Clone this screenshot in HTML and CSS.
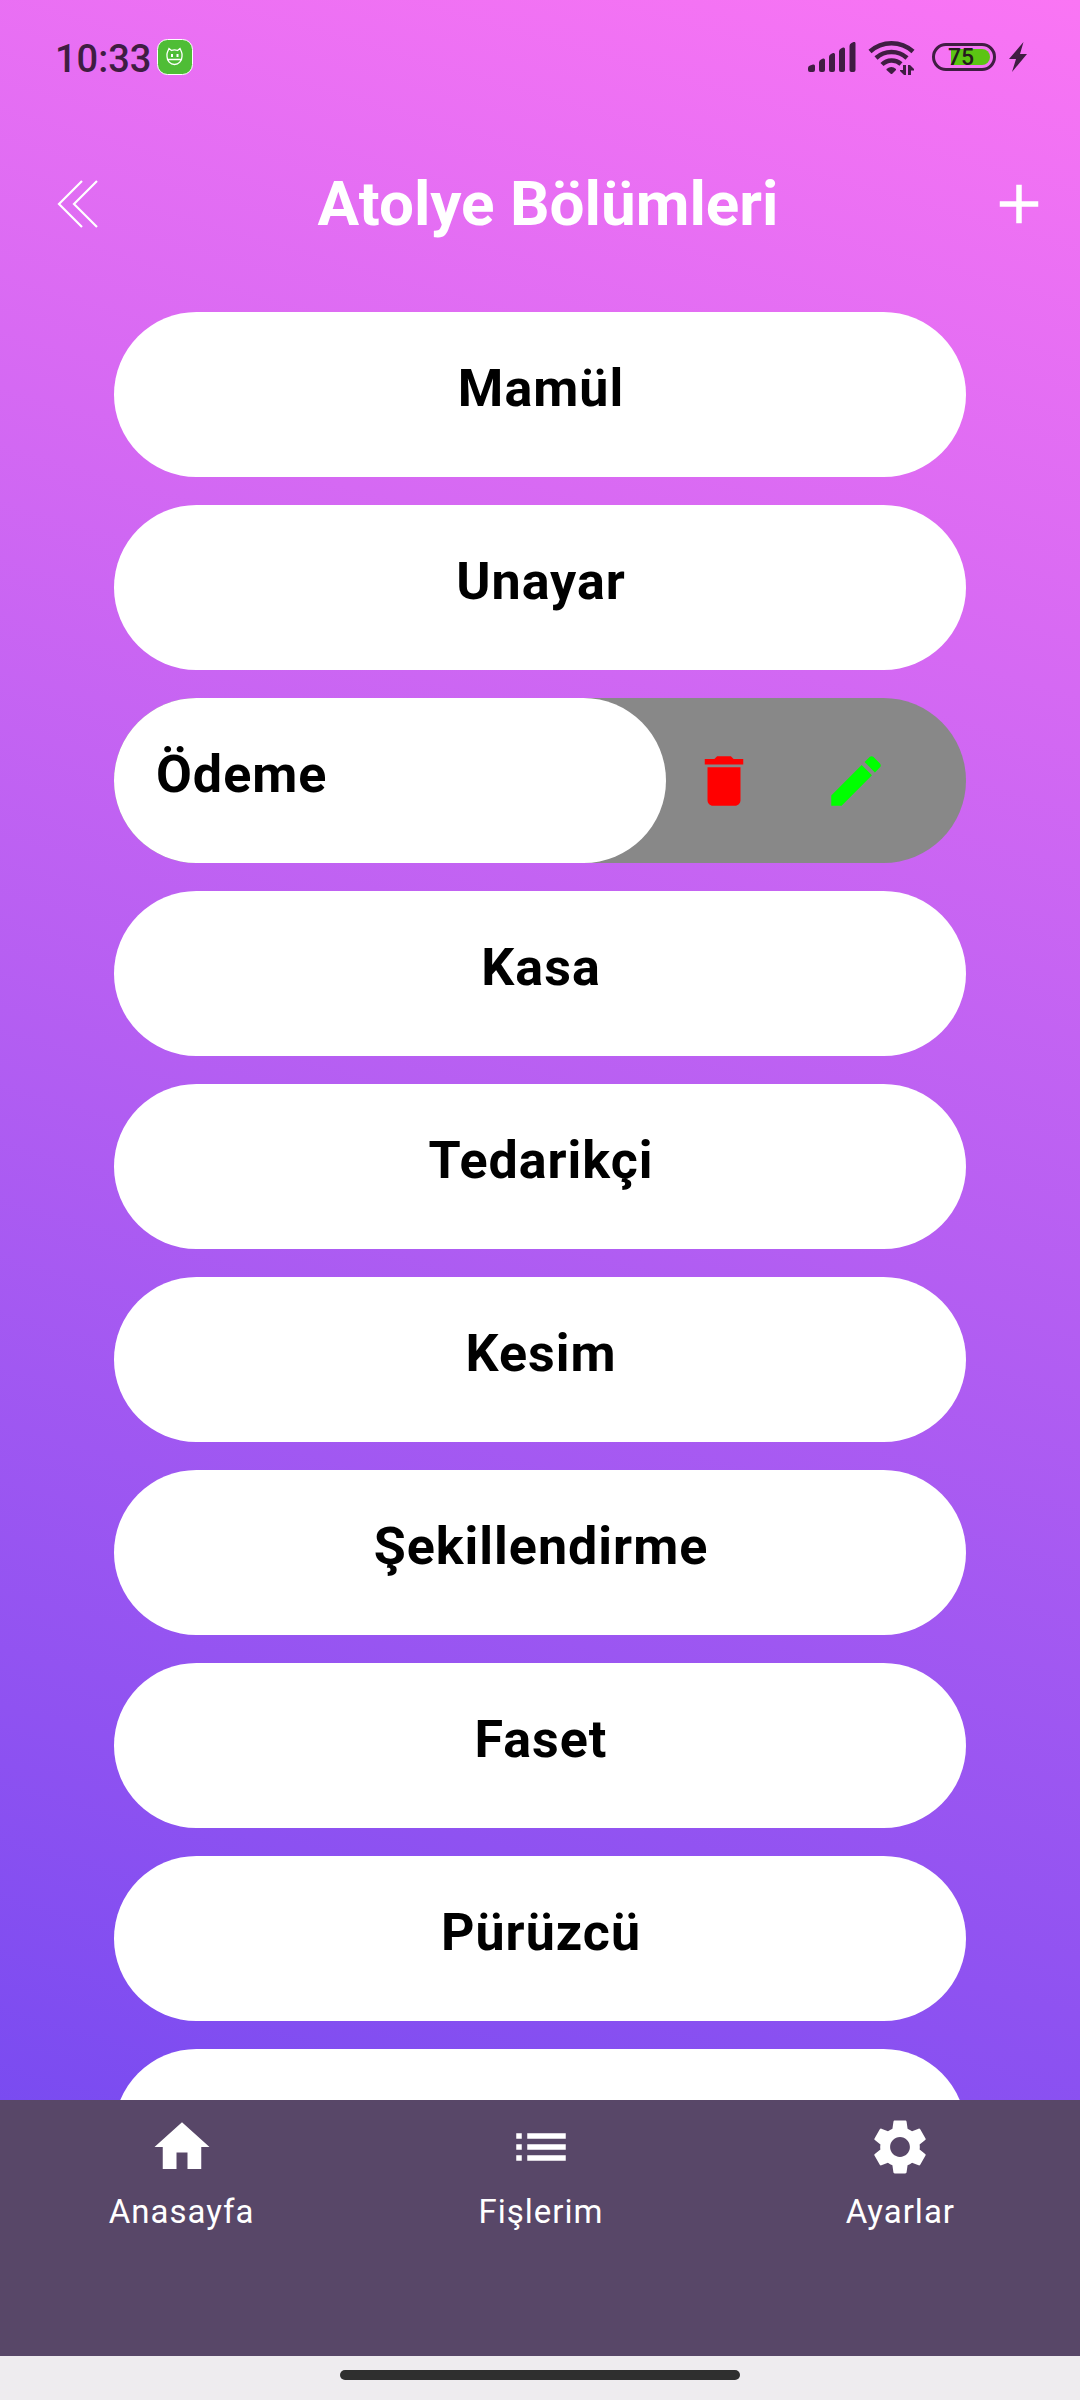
FILE: index.html
```html
<!DOCTYPE html>
<html lang="tr">
<head>
  <meta charset="utf-8">
  <meta name="viewport" content="width=device-width, initial-scale=1">
  <title>Atolye Bölümleri</title>
  <link rel="stylesheet" href="styles.css">
</head>
<body>
  <div class="app">
    <div class="status">
      <span class="status-time">10:33</span>
      <svg class="status-badge" viewBox="0 0 36 36" aria-hidden="true">
        <rect x="0.5" y="0.5" width="35" height="35" rx="10" fill="#4fbd36" stroke="#fff"/>
        <g fill="none" stroke="#fff" stroke-width="1.3">
          <path d="M10.500 13 12 9.500l2.500 2a9 9 0 0 1 6 0l2.500-2 1.500 3.500a8 8 0 0 1 .5 4.500 7.500 8 0 0 1-15 0 8 8 0 0 1 .5-4.500zM10 20.500h15"/>
        </g>
        <rect x="14" y="15" width="2" height="3" fill="#fff"/>
        <rect x="19.500" y="15" width="2" height="3" fill="#fff"/>
      </svg>
      <div class="status-icons">
        <svg class="signal" viewBox="0 0 48 30" aria-hidden="true">
          <path d="M0 26q0-2 2-2.500l3-1q2-.5 2 1.500v4q0 2-2 2H2q-2 0-2-2zM11 20.500q0-2 2-3l2-1q2-.5 2 1.500v10q0 2-2 2h-2q-2 0-2-2zM21 15q0-2 2-3l2-1q2-.5 2 1.500V28q0 2-2 2h-2q-2 0-2-2zM31 9.500q0-2 2-3l2-1q2-.5 2 1.500v21q0 2-2 2h-2q-2 0-2-2zM41.500 4q0-2 2-3l2-1q2-.5 2 1.500V28q0 2-2 2h-2q-2 0-2-2z" fill="#3f1d42"/>
        </svg>
        <svg class="wifi" viewBox="0 0 48 36" aria-hidden="true">
          <g fill="none" stroke="#3f1d42" stroke-width="4.500">
            <path d="M2 12.500a32 32 0 0 1 43 0M8 19a23 23 0 0 1 31 0M14 25.500a14 14 0 0 1 19-.5"/>
          </g>
          <path d="M18.500 30q5-4 9.500 0v1l-4 4h-1l-4.500-4z" fill="#3f1d42"/>
          <path d="M35 26h3v10h-2l-4-4v-1h3zM40 36V26h2l4 4v1.500h-3V36z" fill="#3f1d42"/>
        </svg>
        <div class="battery"><span class="battery-level">75</span></div>
        <svg class="bolt" viewBox="0 0 20 30" aria-hidden="true">
          <path d="M15.500 0 1 17h7L4 30 19 12h-7z" fill="#3f1d42"/>
        </svg>
      </div>
    </div>

    <header class="header">
      <button class="icon-button" type="button" aria-label="Geri">
        <svg class="icon" viewBox="0 0 66 66" fill="none" stroke="#fff" stroke-width="2.200" aria-hidden="true">
          <path d="M38 10 15 33l23 23M53 10 30 33l23 23"/>
        </svg>
      </button>
      <h1 class="title">Atolye Bölümleri</h1>
      <button class="icon-button" type="button" aria-label="Ekle">
        <svg class="icon" viewBox="0 0 24 24" aria-hidden="true"><path fill="#fff" d="M19 13h-6v6h-2v-6H5v-2h6V5h2v6h6v2z"/></svg>
      </button>
    </header>

    <main class="content">
      <ul class="list">
        <li class="row"><button class="card" type="button">Mamül</button></li>
        <li class="row"><button class="card" type="button">Unayar</button></li>
        <li class="row row-open">
          <button class="card card-open" type="button">Ödeme</button>
          <div class="actions">
            <button class="icon-button" type="button" aria-label="Sil">
              <svg class="icon" viewBox="0 0 24 24" aria-hidden="true"><path fill="#f00" d="M6 19c0 1.100.9 2 2 2h8c1.100 0 2-.9 2-2V7H6v12zM19 4h-3.500l-1-1h-5l-1 1H5v2h14V4z"/></svg>
            </button>
            <button class="icon-button" type="button" aria-label="Düzenle">
              <svg class="icon" viewBox="0 0 24 24" aria-hidden="true"><path fill="#0f0" d="M3 17.250V21h3.750L17.810 9.940l-3.750-3.750L3 17.250zM20.710 7.040c.39-.39.39-1.020 0-1.410l-2.340-2.340c-.39-.39-1.020-.39-1.410 0l-1.830 1.830 3.750 3.750 1.830-1.830z"/></svg>
            </button>
          </div>
        </li>
        <li class="row"><button class="card" type="button">Kasa</button></li>
        <li class="row"><button class="card" type="button">Tedarikçi</button></li>
        <li class="row"><button class="card" type="button">Kesim</button></li>
        <li class="row"><button class="card" type="button">Şekillendirme</button></li>
        <li class="row"><button class="card" type="button">Faset</button></li>
        <li class="row"><button class="card" type="button">Pürüzcü</button></li>
        <li class="row"><button class="card" type="button"></button></li>
      </ul>
    </main>

    <nav class="tabs">
      <a class="tab" href="#anasayfa">
        <svg class="icon" viewBox="0 0 24 24" aria-hidden="true"><path fill="#fff" d="M10 20v-6h4v6h5v-8h3L12 3 2 12h3v8z"/></svg>
        <span>Anasayfa</span>
      </a>
      <a class="tab" href="#fislerim">
        <svg class="icon" viewBox="0 0 24 24" aria-hidden="true"><path fill="#fff" d="M3 13h2v-2H3v2zm0 4h2v-2H3v2zm0-8h2V7H3v2zm4 4h14v-2H7v2zm0 4h14v-2H7v2zM7 7v2h14V7H7z"/></svg>
        <span>Fişlerim</span>
      </a>
      <a class="tab" href="#ayarlar">
        <svg class="icon" viewBox="0 0 24 24" aria-hidden="true"><path fill="#fff" d="M19.140 12.940c.04-.3.06-.61.06-.94 0-.32-.02-.64-.07-.94l2.030-1.580c.18-.14.23-.41.12-.61l-1.920-3.320c-.12-.22-.37-.29-.59-.22l-2.390.96c-.5-.38-1.030-.7-1.620-.94l-.36-2.540c-.04-.24-.24-.41-.48-.41h-3.840c-.24 0-.43.17-.47.41l-.36 2.540c-.59.24-1.130.57-1.620.94l-2.390-.96c-.22-.08-.47 0-.59.22L2.740 8.870c-.12.21-.08.47.12.61l2.030 1.580c-.05.3-.09.63-.09.94s.02.64.07.94l-2.030 1.580c-.18.14-.23.41-.12.61l1.920 3.320c.12.22.37.29.59.22l2.390-.96c.5.38 1.030.7 1.620.94l.36 2.540c.05.24.24.41.48.41h3.840c.24 0 .44-.17.47-.41l.36-2.540c.59-.24 1.130-.56 1.620-.94l2.390.96c.22.08.47 0 .59-.22l1.920-3.320c.12-.22.07-.47-.12-.61l-2.010-1.580zM12 15.600c-1.980 0-3.600-1.620-3.600-3.600s1.620-3.600 3.600-3.600 3.600 1.620 3.600 3.600-1.620 3.600-3.600 3.600z"/></svg>
        <span>Ayarlar</span>
      </a>
    </nav>
    <div class="gesture"><div class="gesture-bar"></div></div>
  </div>
</body>
</html>
```
FILE: styles.css
```css
* {
  box-sizing: border-box;
}

body {
  margin: 0;
  font-family: Roboto, "Noto Sans", sans-serif;
}

button {
  padding: 0;
  border: 0;
  background: none;
  font: inherit;
  cursor: pointer;
}

.app {
  display: flex;
  flex-direction: column;
  height: 100vh;
  background: linear-gradient(196deg, #fa75f4, #6a46f0);
}

.status {
  display: flex;
  align-items: center;
  gap: 6px;
  height: 114px;
  padding: 0 52px 0 55px;
  color: #3f1d42;
}

.status-time {
  padding-top: 3px;
  font-size: 38px;
  font-weight: 500;
  line-height: 44px;
}

.status-badge {
  width: 36px;
  height: 36px;
}

.status-icons {
  display: flex;
  align-items: center;
  gap: 12px;
  margin-left: auto;
}

.signal {
  width: 48px;
  height: 30px;
}

.wifi {
  width: 48px;
  height: 36px;
}

.battery {
  width: 64px;
  height: 28px;
  margin-left: 4px;
  padding: 3px;
  border: 3px solid #3f1d42;
  border-radius: 14px;
}

.battery-level {
  display: block;
  height: 16px;
  padding-left: 10px;
  border-radius: 8px;
  background: linear-gradient(to right, transparent 13px, #5bc413 13px);
  color: #26191f;
  font-size: 23px;
  font-weight: 500;
  line-height: 18px;
}

.bolt {
  width: 20px;
  height: 30px;
}

.header {
  display: flex;
  align-items: center;
  height: 180px;
  padding: 0 28px 0 44px;
}

.title {
  flex: 1;
  margin: 0;
  color: #fff;
  font-size: 62px;
  font-weight: 700;
  line-height: 72px;
  text-align: center;
}

.icon-button {
  flex: none;
  width: 66px;
  height: 66px;
}

.icon {
  display: block;
  width: 66px;
  height: 66px;
}

.content {
  flex: 1;
  min-height: 0;
  overflow: hidden;
  padding: 18px 114px 0;
}

.list {
  display: flex;
  flex-direction: column;
  gap: 28px;
  margin: 0;
  padding: 0;
  list-style: none;
}

.row {
  display: flex;
  flex: none;
  height: 165px;
  border-radius: 83px;
}

.row-open {
  background: #888;
}

.card {
  flex: 1;
  padding: 0 40px 11px 42px;
  border-radius: 83px;
  background: #fff;
  color: #000;
  font-size: 52px;
  font-weight: 700;
  line-height: 60px;
  letter-spacing: 1px;
  text-align: center;
}

.card-open {
  text-align: left;
}

.actions {
  display: flex;
  align-items: center;
  gap: 66px;
  padding: 0 77px 0 25px;
}

.tabs {
  display: grid;
  grid-template-columns: repeat(3, 1fr);
  padding: 14px 0 124px 2px;
  background: #584768;
}

.tab {
  display: flex;
  flex-direction: column;
  align-items: center;
  gap: 12px;
  color: #fff;
  font-size: 33px;
  line-height: 40px;
  letter-spacing: 1px;
  text-decoration: none;
}

.gesture {
  display: flex;
  justify-content: center;
  padding: 14px 0 20px;
  background: #eeecef;
}

.gesture-bar {
  width: 37%;
  height: 10px;
  border-radius: 5px;
  background: #2f2f2f;
}
```
